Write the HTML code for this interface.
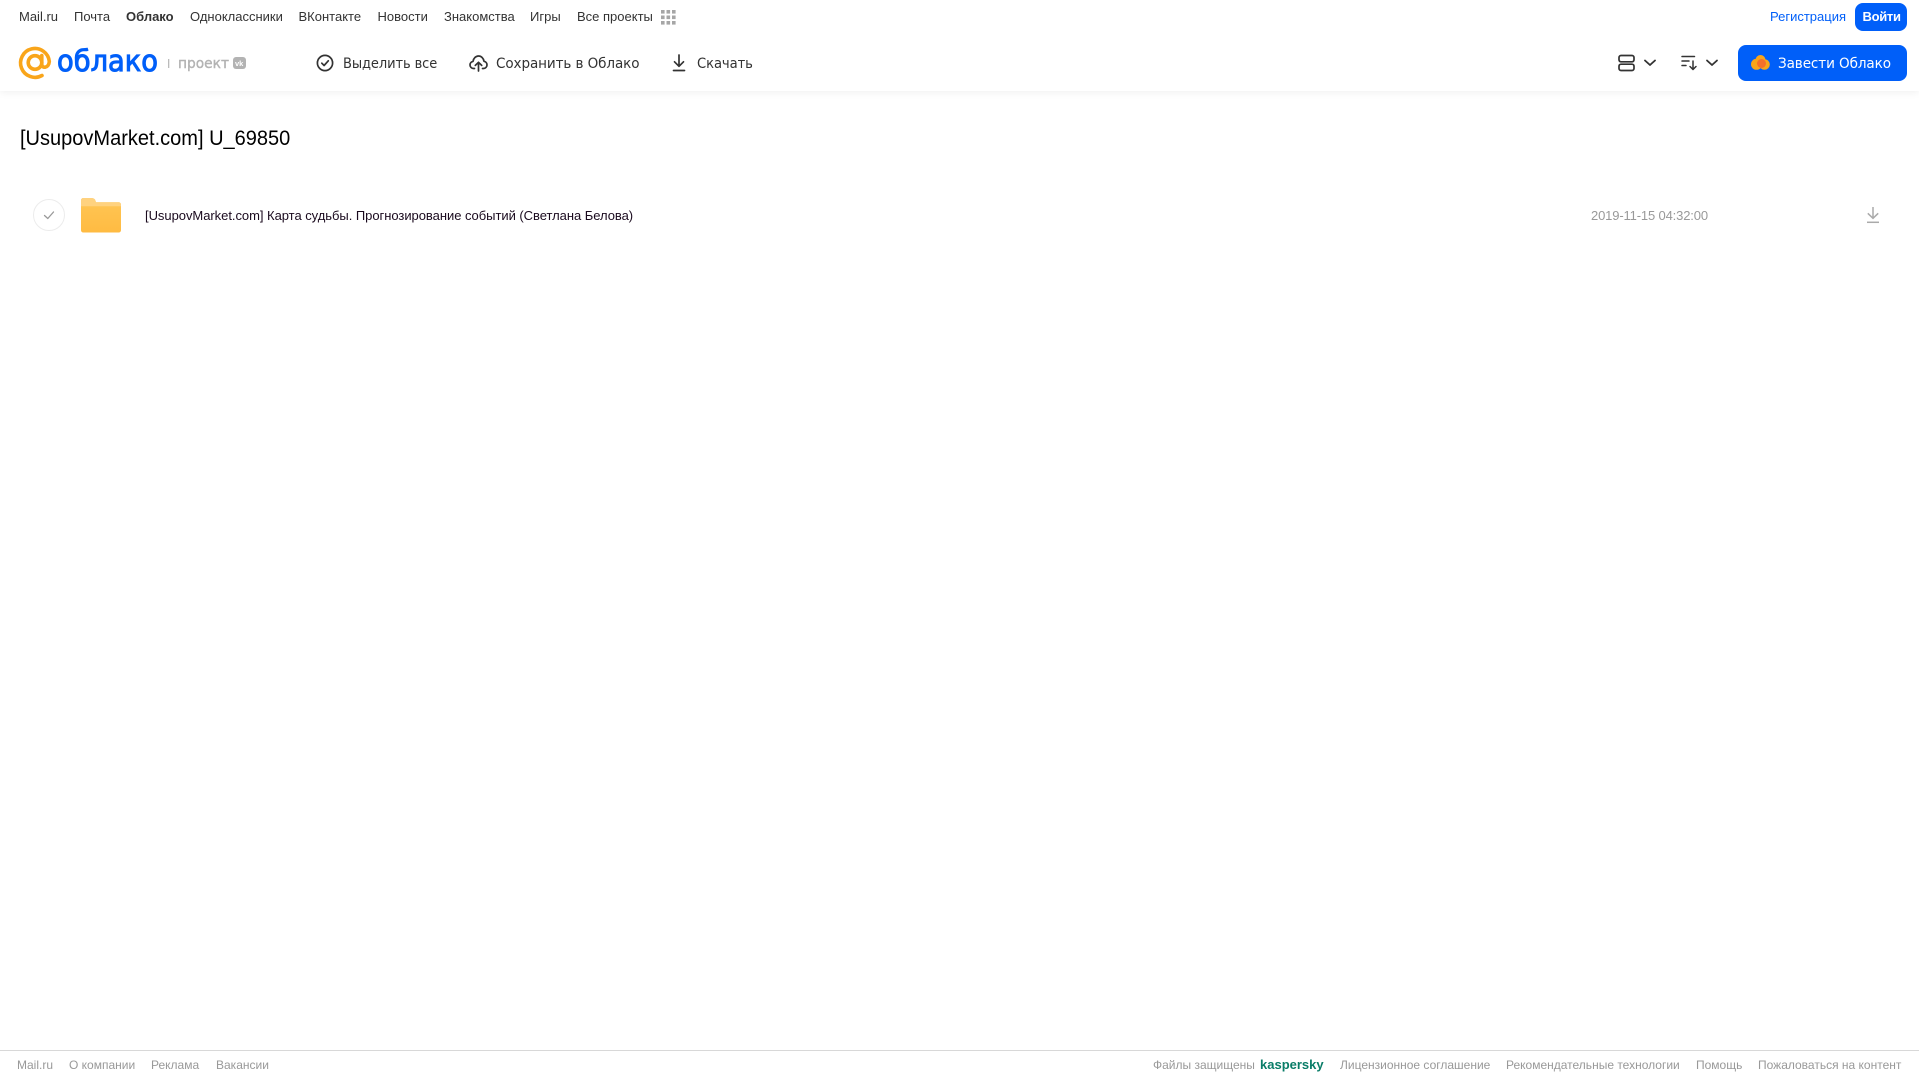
<!DOCTYPE html>
<html lang="ru">
<head>
<meta charset="utf-8">
<title>Облако</title>
<style>
html,body{margin:0;padding:0;background:#fff;width:1919px;height:1079px;overflow:hidden;font-family:"Liberation Sans",Arial,sans-serif}
.t{position:absolute;white-space:nowrap;line-height:20px;height:20px;transform-origin:0 50%}
.n{top:7px;font-size:13px;color:#333}
.b{top:54px;font-size:14px;color:#333;font-family:"DejaVu Sans",sans-serif;letter-spacing:-.1px}
.f{top:1055px;font-size:12px;color:#999}
svg{position:absolute;overflow:visible}
#hd{position:absolute;left:0;top:0;width:1919px;height:91px;background:#fff;box-shadow:0 1px 8px rgba(0,0,0,.07)}
.btn{position:absolute;background:#005ff9;border-radius:8px}
</style>
</head>
<body>
<div id="hd"></div>

<span class="t n" style="left:19px">Mail.ru</span>
<span class="t n" style="left:74px">Почта</span>
<span class="t n" style="left:126px;font-weight:bold">Облако</span>
<span class="t n" style="left:190px">Одноклассники</span>
<span class="t n" style="left:298.500px">ВКонтакте</span>
<span class="t n" style="left:377.500px">Новости</span>
<span class="t n" style="left:444px">Знакомства</span>
<span class="t n" style="left:530px">Игры</span>
<span class="t n" style="left:577px">Все проекты</span>
<svg style="left:661px;top:10px" width="15" height="15" fill="#a6a6a6"><rect x="0" y="0" width="3.600" height="3.600"/><rect x="5.500" y="0" width="3.600" height="3.600"/><rect x="11" y="0" width="3.600" height="3.600"/><rect x="0" y="5.500" width="3.600" height="3.600"/><rect x="5.500" y="5.500" width="3.600" height="3.600"/><rect x="11" y="5.500" width="3.600" height="3.600"/><rect x="0" y="11" width="3.600" height="3.600"/><rect x="5.500" y="11" width="3.600" height="3.600"/><rect x="11" y="11" width="3.600" height="3.600"/></svg>

<span class="t n" style="left:1770px;color:#005ff9">Регистрация</span>
<div class="btn" style="left:1855px;top:3px;width:52px;height:28px"></div>
<span class="t n" style="left:1862.500px;color:#fff;font-weight:bold;letter-spacing:-.3px">Войти</span>

<!-- logo -->
<svg style="left:0;top:35px" width="260" height="50">
<circle cx="35" cy="27.500" r="6.800" fill="none" stroke="#f9a51a" stroke-width="3.600"/>
<path d="M41.800 20.500V29.500C41.800 33.500 48.800 33.500 49.300 26.500A14.400 14.400 0 1 0 42 40.500" fill="none" stroke="#f9a51a" stroke-width="3.600" stroke-linecap="round"/>
<text x="57" y="36" font-family="'DejaVu Sans',sans-serif" font-size="29" fill="#005ff9" stroke="#005ff9" stroke-width="1" textLength="101" lengthAdjust="spacingAndGlyphs">облако</text>
<rect x="168" y="24" width="1.300" height="9" fill="#bbb"/>
<text x="178" y="33" font-family="'DejaVu Sans',sans-serif" font-size="14.500" fill="#b3b3b3" stroke="#b3b3b3" stroke-width=".4" textLength="51" lengthAdjust="spacingAndGlyphs">проект</text>
<rect x="233" y="22" width="13" height="12" rx="3" fill="#b3b3b3"/>
<text x="235" y="31" font-family="'Liberation Sans',sans-serif" font-size="7.500" font-weight="bold" fill="#fff">vk</text>
</svg>

<!-- toolbar -->
<svg style="left:316px;top:54px" width="18" height="18" fill="none" stroke="#333" stroke-width="1.700"><circle cx="9" cy="9" r="7.600"/><path d="M5.800 9.200L8.100 11.500L12.300 6.800" stroke-linecap="round" stroke-linejoin="round"/></svg>
<span class="t b" style="left:343px;transform:scaleX(.93)">Выделить все</span>

<svg style="left:469px;top:54px" width="19" height="18" fill="none" stroke="#333" stroke-width="1.700" stroke-linecap="round" stroke-linejoin="round"><path d="M5.500 14.500H4.600C2.500 14.500 1 12.800 1 11C1 9.100 2.300 7.700 4 7.400C4.500 4.300 6.800 2 9.500 2C12.300 2 14.500 4.200 15 7.300C16.800 7.600 18 9.100 18 11C18 12.800 16.500 14.500 14.400 14.500H13.500"/><path d="M9.500 17V8.500M6.300 11.400L9.500 8.300L12.700 11.400"/></svg>
<span class="t b" style="left:496px;transform:scaleX(.967)">Сохранить в Облако</span>

<svg style="left:671px;top:54px" width="16" height="18" fill="none" stroke="#333" stroke-width="1.700" stroke-linecap="round" stroke-linejoin="round"><path d="M8 1V12M3.500 7.800L8 12.300L12.500 7.800"/><path d="M2.500 16.500H13.500"/></svg>
<span class="t b" style="left:697px;transform:scaleX(.94)">Скачать</span>

<svg style="left:1618px;top:54px" width="17" height="18" fill="none" stroke="#333" stroke-width="1.700"><rect x="1" y="1.500" width="15" height="6.300" rx="2"/><rect x="1" y="10.200" width="15" height="6.300" rx="2"/></svg>
<svg style="left:1644px;top:59px" width="12" height="8" fill="none" stroke="#333" stroke-width="1.800" stroke-linecap="round" stroke-linejoin="round"><path d="M1 1.500L6 6L11 1.500"/></svg>
<svg style="left:1681px;top:55px" width="17" height="16" fill="none" stroke="#333" stroke-width="1.500" stroke-linecap="round" stroke-linejoin="round"><path d="M1 1.500H13.500M1 6H8M1 10.500H5"/><path d="M12 6V14.500M9 11.500L12 14.500L15 11.500"/></svg>
<svg style="left:1706px;top:59px" width="12" height="8" fill="none" stroke="#333" stroke-width="1.800" stroke-linecap="round" stroke-linejoin="round"><path d="M1 1.500L6 6L11 1.500"/></svg>

<div class="btn" style="left:1738px;top:45px;width:169px;height:36px"></div>
<svg style="left:1751px;top:55px" width="19" height="15"><circle cx="5.500" cy="9.300" r="5.500" fill="#f9a51a"/><circle cx="9.500" cy="5" r="5" fill="#f9a51a"/><circle cx="13.500" cy="9.500" r="5.300" fill="#f9a51a"/><circle cx="10.500" cy="8.500" r="4.500" fill="#f5702a"/></svg>
<span class="t b" style="left:1778px;color:#fff;transform:scaleX(.968)">Завести Облако</span>

<!-- title -->
<div class="t" style="left:20px;top:126px;height:26px;line-height:26px;font-size:21px;color:#000;transform:scaleX(.953)">[UsupovMarket.com] U_69850</div>

<!-- row -->
<svg style="left:33px;top:199px" width="32" height="32" fill="none"><circle cx="16" cy="16" r="15.500" stroke="#ececec"/><path d="M11.500 16.500L14.800 19.500L20.500 13" stroke="#999" stroke-width="1.300" stroke-linecap="round" stroke-linejoin="round"/></svg>
<svg style="left:81px;top:197.500px" width="40" height="35">
<defs><linearGradient id="fg" x1="0" y1="0" x2="0" y2="1"><stop offset="0" stop-color="#ffc655"/><stop offset="1" stop-color="#ffbb42"/></linearGradient></defs>
<path d="M0 2.500C0 1 1 0 2.500 0H10C12 0 13 .5 14 1.500L15 4.200H37.500C39 4.200 40 5.200 40 6.700V32C40 33.500 39 34.500 37.500 34.500H2.500C1 34.500 0 33.500 0 32Z" fill="url(#fg)"/>
<path d="M0 2.500C0 1 1 0 2.500 0H10C12 0 13 .5 14 1.500L15 4.200H37.500C39 4.200 40 5.200 40 6.700V8.200H0Z" fill="#ffd27f"/>
</svg>
<span class="t" style="left:145px;top:206px;font-size:13px;color:#1a0a1e;letter-spacing:-.04px">[UsupovMarket.com] Карта судьбы. Прогнозирование событий (Светлана Белова)</span>
<span class="t" style="left:1591px;top:206px;font-size:13px;color:#999;letter-spacing:-.15px">2019-11-15 04:32:00</span>
<svg style="left:1866px;top:206px" width="14" height="18" fill="none" stroke="#aaa" stroke-width="1.500"><path d="M7 1V12M1.800 7.300L7 12.300L12.200 7.300"/><path d="M1 16.300H13"/></svg>

<!-- footer -->
<div style="position:absolute;left:0;top:1050px;width:1919px;height:1px;background:#d8d8d8"></div>
<span class="t f" style="left:17px">Mail.ru</span>
<span class="t f" style="left:69px">О компании</span>
<span class="t f" style="left:151px">Реклама</span>
<span class="t f" style="left:216px">Вакансии</span>
<span class="t f" style="left:1153px">Файлы защищены</span>
<span class="t f" style="left:1260px;color:#0a7d68;font-weight:bold;font-size:13px">kaspersky</span>
<span class="t f" style="left:1340px">Лицензионное соглашение</span>
<span class="t f" style="left:1506px">Рекомендательные технологии</span>
<span class="t f" style="left:1696px">Помощь</span>
<span class="t f" style="left:1758px">Пожаловаться на контент</span>
</body>
</html>
